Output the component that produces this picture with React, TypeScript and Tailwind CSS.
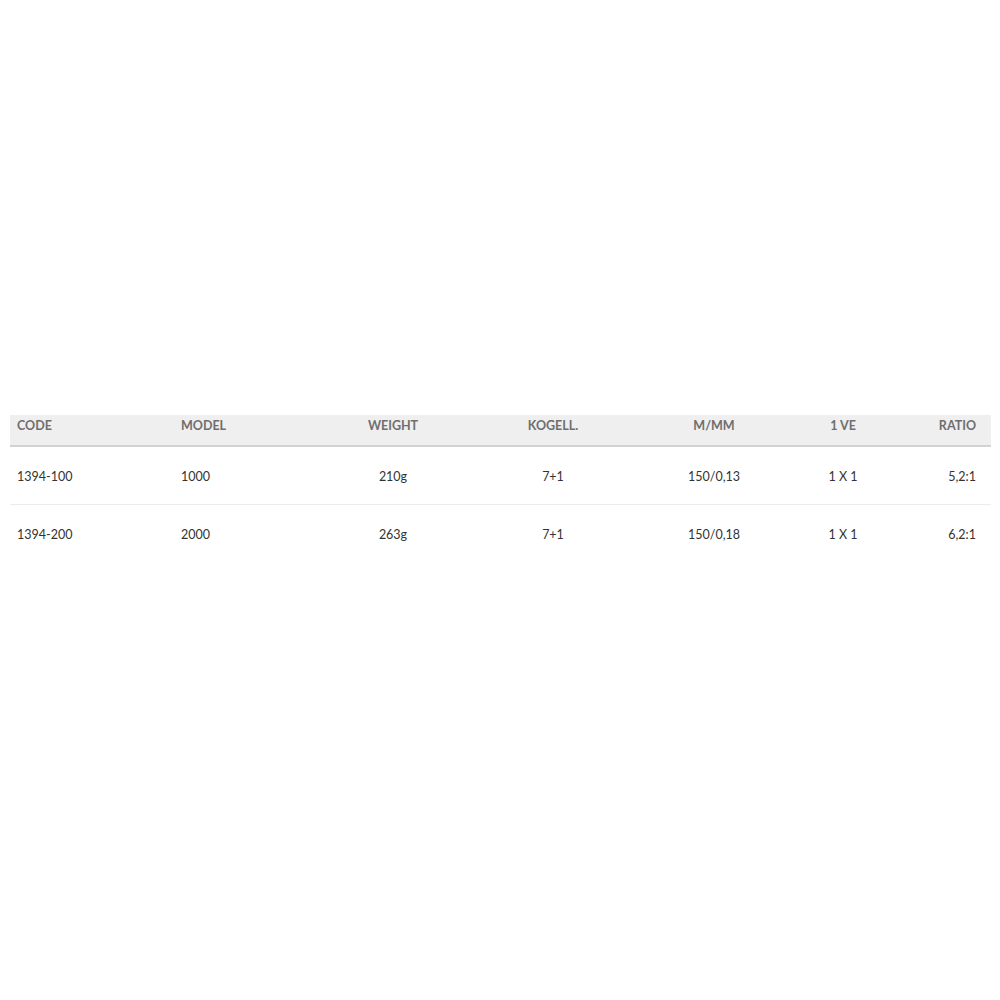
const cols = ["CODE", "MODEL", "WEIGHT", "KOGELL.", "M/MM", "1 VE", "RATIO"];

const rows = [
  ["1394-100", "1000", "210g", "7+1", "150/0,13", "1 X 1", "5,2:1"],
  ["1394-200", "2000", "263g", "7+1", "150/0,18", "1 X 1", "6,2:1"],
];

const align = [
  "text-left pl-[7px]",
  "text-left pl-[7px]",
  "text-center",
  "text-center",
  "text-center",
  "text-center",
  "text-right pr-[15px]",
];

export default function App() {
  return (
    <div className="min-h-screen bg-white px-[10px] pt-[415px]" style={{ fontFamily: "Lato, 'Noto Sans', sans-serif" }}>
      <div className="w-[981px]">
        <div className="grid grid-cols-[164px_139px_160px_160px_162px_96px_1fr] h-[32px] bg-[#efefef] border-b-2 border-[#d2d2d2]">
          {cols.map((c, i) => (
            <div key={c} className={`${align[i]} pt-[1px] text-[12.5px] font-bold text-[#6e6e6e] leading-[20px]`}>
              {c}
            </div>
          ))}
        </div>
        {rows.map((r, ri) => (
          <div
            key={r[0]}
            className={`grid grid-cols-[164px_139px_160px_160px_162px_96px_1fr] h-[58px] pt-[2px] items-center ${ri === 0 ? "border-b border-[#ececec]" : ""}`}
          >
            {r.map((v, i) => (
              <div key={i} className={`${align[i]} text-[12.5px] text-[#333333] leading-[20px]`}>
                {v}
              </div>
            ))}
          </div>
        ))}
      </div>
    </div>
  );
}
